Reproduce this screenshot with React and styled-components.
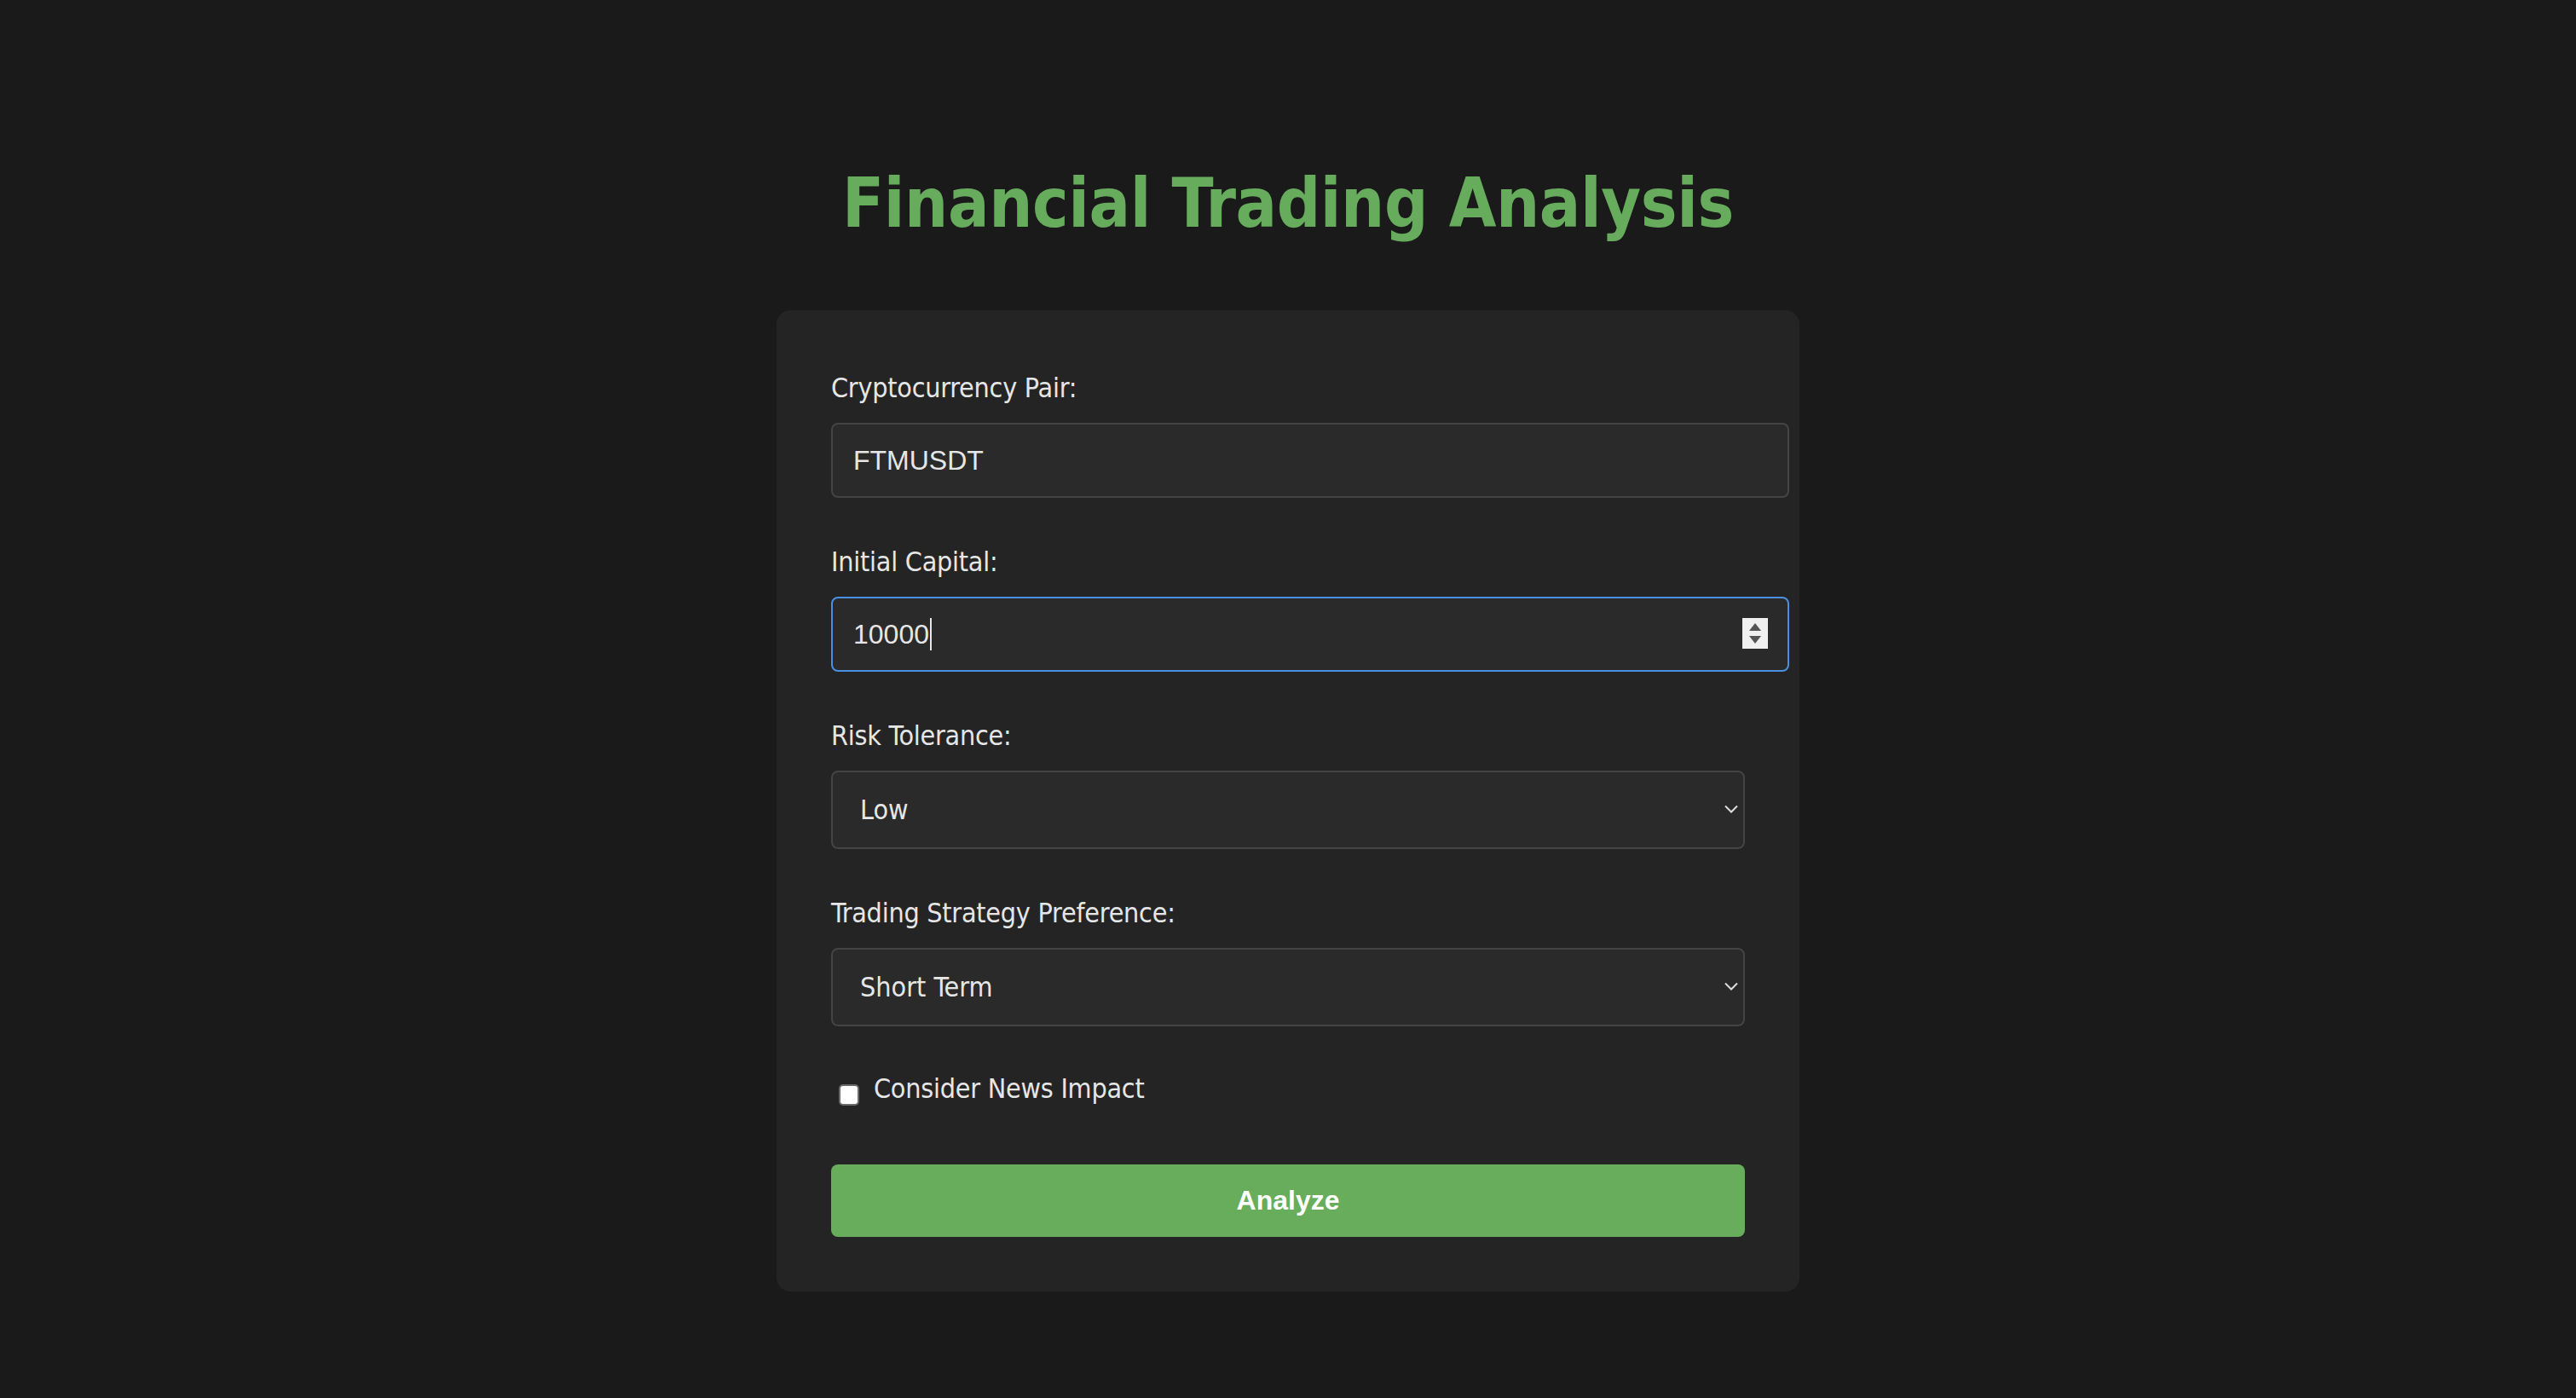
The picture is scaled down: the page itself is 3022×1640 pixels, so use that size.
import React from 'react';
import styled, { createGlobalStyle } from 'styled-components';

const GlobalStyle = createGlobalStyle`
  html, body {
    margin: 0;
    padding: 0;
    background: #1a1a1a;
  }
  body {
    font-family: "DejaVu Sans", Verdana, sans-serif;
    font-stretch: condensed;
    color: #e6e6e6;
  }
`;

const Page = styled.div`
  min-height: 1640px;
  padding-top: 191px;
  box-sizing: border-box;
  display: flex;
  flex-direction: column;
  align-items: center;
`;

const Title = styled.h1`
  margin: 0 0 77px;
  font-size: 80px;
  line-height: 96px;
  font-weight: bold;
  letter-spacing: -0.4px;
  color: #66ac5c;
  text-align: center;
`;

const Card = styled.form`
  width: 1200px;
  box-sizing: border-box;
  padding: 65px 64px 64px;
  background: #242424;
  border-radius: 16px;
`;

const FormGroup = styled.div`
  margin-bottom: ${(p) => p.gap || 49}px;
`;

const Label = styled.label`
  display: block;
  margin-bottom: 15px;
  font-size: 32px;
  line-height: 52px;
  letter-spacing: -0.25px;
  color: #e6e6e6;
`;

const TextInput = styled.input`
  display: block;
  width: 100%;
  box-sizing: content-box;
  margin: 0;
  padding: 24px;
  border: 2px solid ${(p) => (p.$focused ? '#4a90e2' : '#444444')};
  border-radius: 8px;
  background: #2a2a2a;
  color: #e6e6e6;
  font-family: "Liberation Sans", Arial, sans-serif;
  font-stretch: normal;
  font-size: 32px;
  line-height: 36px;
  height: 36px;
  outline: none;
  appearance: textfield;
  -moz-appearance: textfield;
  &::-webkit-outer-spin-button,
  &::-webkit-inner-spin-button {
    -webkit-appearance: none;
    margin: 0;
  }
`;

const FieldWrap = styled.div`
  position: relative;
`;

const Spinner = styled.div`
  position: absolute;
  top: 25px;
  right: -27px;
  width: 30px;
  height: 36px;
  background: #f0f0f0;
  display: flex;
  flex-direction: column;
  align-items: center;
  justify-content: center;
  gap: 6px;
`;

const Caret = styled.span`
  position: absolute;
  left: 116px;
  top: 25px;
  width: 2px;
  height: 38px;
  background: #e6e6e6;
`;

const Select = styled.select`
  display: block;
  width: 100%;
  height: 92px;
  box-sizing: border-box;
  margin: 0;
  padding: 0 60px 0 32px;
  border: 2px solid #444444;
  border-radius: 8px;
  background: #2a2a2a;
  color: #e6e6e6;
  font-family: "DejaVu Sans", Verdana, sans-serif;
  font-stretch: condensed;
  font-size: 32px;
  appearance: none;
  -webkit-appearance: none;
  outline: none;
`;

const Chevron = styled.svg`
  position: absolute;
  right: 8px;
  top: 40px;
  pointer-events: none;
`;

const CheckRow = styled.label`
  display: flex;
  align-items: flex-start;
  margin-bottom: 63px;
  font-size: 32px;
  line-height: 52px;
  letter-spacing: -0.25px;
  color: #e6e6e6;
`;

const Checkbox = styled.input`
  appearance: none;
  -webkit-appearance: none;
  width: 24px;
  height: 25px;
  box-sizing: border-box;
  margin: 21px 17px 0 9px;
  border: 2px solid #6b6b6b;
  border-radius: 5px;
  background: #ffffff;
`;

const Button = styled.button`
  display: block;
  width: 100%;
  height: 85px;
  border: none;
  border-radius: 8px;
  background: #67ad5b;
  color: #ffffff;
  font-family: "Liberation Sans", Arial, sans-serif;
  font-size: 32px;
  font-weight: bold;
  cursor: pointer;
`;

function SelectField({ id, value, options }) {
  return (
    <FieldWrap>
      <Select id={id} defaultValue={value}>
        {options.map((o) => (
          <option key={o} value={o}>
            {o}
          </option>
        ))}
      </Select>
      <Chevron width="16" height="10" viewBox="0 0 16 10">
        <path d="M1 1.5 L8 8.5 L15 1.5" fill="none" stroke="#dcdcdc" strokeWidth="2" />
      </Chevron>
    </FieldWrap>
  );
}

export default function App() {
  return (
    <>
      <GlobalStyle />
      <Page>
        <Title>Financial Trading Analysis</Title>
        <Card onSubmit={(e) => e.preventDefault()}>
          <FormGroup>
            <Label htmlFor="pair">Cryptocurrency Pair:</Label>
            <TextInput id="pair" type="text" defaultValue="FTMUSDT" />
          </FormGroup>
          <FormGroup>
            <Label htmlFor="capital">Initial Capital:</Label>
            <FieldWrap>
              <TextInput id="capital" type="number" defaultValue="10000" $focused />
              <Caret />
              <Spinner>
                <svg width="14" height="9" viewBox="0 0 14 9">
                  <path d="M7 0 L14 9 L0 9 Z" fill="#555555" />
                </svg>
                <svg width="14" height="9" viewBox="0 0 14 9">
                  <path d="M0 0 L14 0 L7 9 Z" fill="#555555" />
                </svg>
              </Spinner>
            </FieldWrap>
          </FormGroup>
          <FormGroup>
            <Label htmlFor="risk">Risk Tolerance:</Label>
            <SelectField id="risk" value="Low" options={['Low', 'Medium', 'High']} />
          </FormGroup>
          <FormGroup gap={47}>
            <Label htmlFor="strategy">Trading Strategy Preference:</Label>
            <SelectField
              id="strategy"
              value="Short Term"
              options={['Short Term', 'Medium Term', 'Long Term']}
            />
          </FormGroup>
          <CheckRow>
            <Checkbox type="checkbox" />
            Consider News Impact
          </CheckRow>
          <Button type="submit">Analyze</Button>
        </Card>
      </Page>
    </>
  );
}
